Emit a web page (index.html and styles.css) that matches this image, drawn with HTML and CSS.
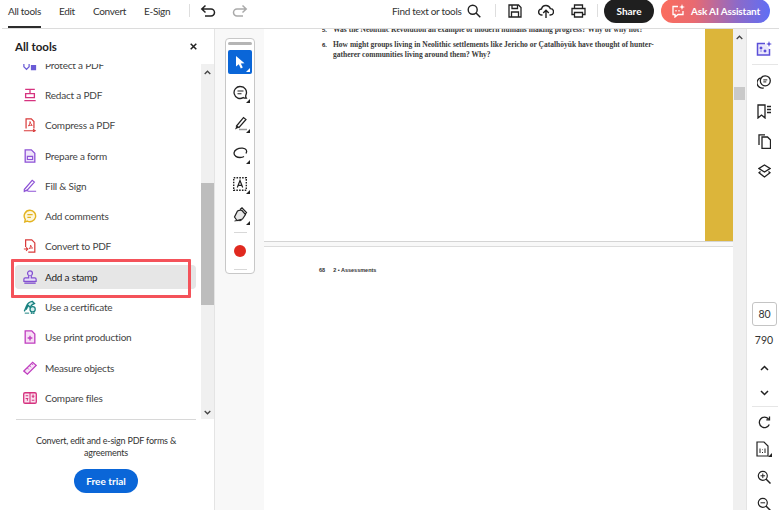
FILE: index.html
```html
<!DOCTYPE html>
<html lang="en">
<head>
<meta charset="utf-8">
<title>All tools</title>
<link rel="stylesheet" href="styles.css">
</head>
<body>
<svg class="defs" width="0" height="0" aria-hidden="true">
  <symbol id="caret" viewBox="0 0 5 5"><path d="M5 0v5H0z" fill="#222"/></symbol>
</svg>
<header class="topbar">
  <nav class="tabs">
    <a class="tab tab-active">All tools</a>
    <a class="tab">Edit</a>
    <a class="tab">Convert</a>
    <a class="tab">E-Sign</a>
  </nav>
  <span class="vsep sep-a"></span>
  <svg class="ico undo" width="16" height="14" viewBox="0 0 16 14"><path d="M5.500 1.500 1.800 5l3.700 3.500M2 5h9a3.500 3.500 0 0 1 0 7H5" fill="none" stroke="#222" stroke-width="1.500"/></svg>
  <svg class="ico redo" width="16" height="14" viewBox="0 0 16 14"><path d="M10.500 1.500 14.200 5l-3.700 3.500M14 5H5a3.500 3.500 0 0 0 0 7h6" fill="none" stroke="#aaa" stroke-width="1.500"/></svg>
  <span class="find">Find text or tools</span>
  <svg class="ico search" width="14" height="14" viewBox="0 0 14 14"><circle cx="5.700" cy="5.700" r="4.500" fill="none" stroke="#222" stroke-width="1.400"/><path d="m9 9 4.300 4.300" stroke="#222" stroke-width="1.500"/></svg>
  <span class="vsep sep-b"></span>
  <svg class="ico save" width="14" height="14" viewBox="0 0 14 14"><path d="M1 1h9.500L13 3.500V13H1zM4 1v3.500h5.500V1M3.500 13V8h7v5" fill="none" stroke="#222" stroke-width="1.300"/></svg>
  <svg class="ico upload" width="16" height="15" viewBox="0 0 16 15"><path d="M4.500 11H3.800A3 3 0 0 1 3.500 5 4.600 4.600 0 0 1 12.300 4.600 3.200 3.200 0 0 1 12.300 11h-.8M8 14V6.500M5.200 9 8 6.300 10.800 9" fill="none" stroke="#222" stroke-width="1.400"/></svg>
  <svg class="ico print" width="15" height="14" viewBox="0 0 15 14"><path d="M3.500 4V1h8v3M3.500 10.500H1V4.500h13v6h-2.500M3.500 8.500h8V13h-8z" fill="none" stroke="#222" stroke-width="1.300"/></svg>
  <span class="vsep sep-c"></span>
  <button class="share">Share</button>
  <button class="ask">
    <svg width="15" height="14" viewBox="0 0 15 14"><path d="M7 2.500H2v8h2v2.500l3-2.500h5V7" fill="none" stroke="#fff" stroke-width="1.300"/><path d="M11 0l.8 2.200L14 3l-2.200.8L11 6l-.8-2.200L8 3l2.200-.8z" fill="#fff"/><path d="M5 6v1.500M8 6v1.500" stroke="#fff" stroke-width="1.200"/></svg>
    Ask AI Assistant
  </button>
</header>

<div class="workspace">
  <aside class="panel">
    <div class="panel-head">
      <h2 class="panel-title">All tools</h2>
      <svg class="close" width="7" height="7" viewBox="0 0 7 7"><path d="m.7.700 5.600 5.600m0-5.600L.7 6.300" stroke="#222" stroke-width="1.500"/></svg>
    </div>
    <div class="panel-body">
      <ul class="tool-list">
        <li class="tool"><svg class="ti" viewBox="0 0 16 16" width="16" height="16"><path d="M1 4v6l3 3 3-3V4" fill="none" stroke="#6a5bd6" stroke-width="1.400"/><rect x="9" y="8" width="6" height="6" fill="#6a5bd6"/></svg>Protect a PDF</li>
        <li class="tool"><svg class="ti" viewBox="0 0 16 16" width="16" height="16"><path d="M2.500 1.500h11M8 1.500V6M1.500 14.500h13M3 6.500h10V11H3z" fill="none" stroke="#d6337f" stroke-width="1.500"/></svg>Redact a PDF</li>
        <li class="tool"><svg class="ti" viewBox="0 0 16 16" width="16" height="16"><path d="M3.500 12V1h6L12.500 4v8" fill="none" stroke="#d93a3a" stroke-width="1.400"/><path d="M1 14.500h12M11.500 12.800 14 14.500l-2.500 1.500" fill="none" stroke="#d93a3a" stroke-width="1.200"/><path d="M6 9c1.500-1 2-3 2-5 .5 2 1.500 3.500 2.500 4.500-1.500-.3-3-.2-4.500.5z" fill="none" stroke="#d93a3a"/></svg>Compress a PDF</li>
        <li class="tool"><svg class="ti" viewBox="0 0 16 16" width="16" height="16"><path d="M2.500 1h7L13.500 5v10h-11z" fill="#efe6fa" stroke="#8e53d6" stroke-width="1.500"/><path d="M5 8.500h6V12H5z" fill="none" stroke="#8e53d6" stroke-width="1.300"/></svg>Prepare a form</li>
        <li class="tool"><svg class="ti" viewBox="0 0 16 16" width="16" height="16"><path d="M1.500 12 10.500 1.500l2.500 2L5 12.500l-3.500 1.500zM1 14.500c3-2 4-1 5.500-.5h8.500" fill="none" stroke="#8e53d6" stroke-width="1.400"/></svg>Fill &amp; Sign</li>
        <li class="tool"><svg class="ti" viewBox="0 0 16 16" width="16" height="16"><path d="M8 1.500a6.500 6.500 0 1 1-3 12.300L2 14.800l.6-3A6.500 6.500 0 0 1 8 1.500z" fill="#fdf6dc" stroke="#e3b320" stroke-width="1.600"/><path d="M5 6.500h6M5 9.500h4" stroke="#e3b320" stroke-width="1.300"/></svg>Add comments</li>
        <li class="tool"><svg class="ti" viewBox="0 0 16 16" width="16" height="16"><path d="M3 9V1h7l3.500 3.500V15H6" fill="none" stroke="#d93a3a" stroke-width="1.400"/><path d="M1 11.500h4M3.500 9.500l2 2-2 2" fill="none" stroke="#d93a3a" stroke-width="1.200"/><path d="M7 11c1.200-1 1.700-2.500 1.700-4 .4 1.500 1.200 2.700 2.300 3.300-1.400-.1-2.800 0-4 .7z" fill="none" stroke="#d93a3a"/></svg>Convert to PDF</li>
        <li class="tool tool-active"><svg class="ti" viewBox="0 0 16 16" width="16" height="16"><circle cx="8" cy="3.800" r="2.800" fill="#e7dcf8" stroke="#8351d0" stroke-width="1.400"/><path d="M6.500 6.500V9H2.500a1.500 1.500 0 0 0-1.500 1.500V13h14v-2.500A1.500 1.500 0 0 0 13.500 9h-4V6.500" fill="#e7dcf8" stroke="#8351d0" stroke-width="1.400"/><path d="M1.500 15h13" stroke="#8351d0" stroke-width="1.600"/></svg>Add a stamp</li>
        <li class="tool"><svg class="ti" viewBox="0 0 16 16" width="16" height="16"><path d="M1.500 13 4 7c1-3 4-5 6.500-5.500L13 4c-2 .5-3.500 2-4.500 3.500M3.500 11 6 6l2 2.500" fill="#d6efee" stroke="#17807f" stroke-width="1.500"/><circle cx="11" cy="10.500" r="3" fill="#d6efee" stroke="#17807f" stroke-width="1.400"/><path d="M9.500 13v3l1.500-1 1.500 1v-3M2 15h5" fill="none" stroke="#17807f" stroke-width="1.100"/></svg>Use a certificate</li>
        <li class="tool"><svg class="ti" viewBox="0 0 16 16" width="16" height="16"><path d="M2.500 1h7.500l3.500 3.500V15h-11z" fill="#f7dff5" stroke="#c03fc0" stroke-width="1.500"/><path d="M8 6.500V12M5.300 9.200h5.400" stroke="#c03fc0" stroke-width="1.600"/></svg>Use print production</li>
        <li class="tool"><svg class="ti" viewBox="0 0 16 16" width="16" height="16"><path d="m1 11.500 10-10L15 5 5 15z" fill="#f8e6f6" stroke="#c03fc0" stroke-width="1.500"/><path d="m5 8 1.700 1.700M7.500 5.500l1.700 1.700M10 3l1.700 1.700" stroke="#c03fc0"/></svg>Measure objects</li>
        <li class="tool"><svg class="ti" viewBox="0 0 16 16" width="16" height="16"><rect x=".8" y="2" width="14.400" height="12" rx="1.500" fill="#fbe1ef" stroke="#d6337f" stroke-width="1.500"/><path d="M8 2v12M3 5.500h3M3 8.500h3M10 6h3M10 10.500h3M5 11v-3M11.500 4v4" stroke="#d6337f" stroke-width="1.200"/></svg>Compare files</li>
      </ul>
      <div class="scrollbar sb-left">
        <svg class="chev" width="7" height="5" viewBox="0 0 7 5"><path d="M.7 4 3.500 1.200 6.300 4" fill="none" stroke="#444" stroke-width="1.300"/></svg>
        <div class="track"><div class="thumb"></div></div>
        <svg class="chev" width="7" height="5" viewBox="0 0 7 5"><path d="M.7 1 3.500 3.800 6.300 1" fill="none" stroke="#444" stroke-width="1.300"/></svg>
      </div>
    </div>
    <div class="panel-foot">
      <p class="promo">Convert, edit and e-sign PDF forms &amp;<br>agreements</p>
      <button class="trial">Free trial</button>
    </div>
  </aside>

  <main class="canvas">
    <div class="gutter">
      <div class="quick">
        <span class="handle"></span>
        <span class="qt qt-on">
          <svg width="11" height="13" viewBox="0 0 11 13"><path d="M1 0v10.500l2.800-2.300 2 4.300 2-.9-2-4.200 3.700-.2z" fill="#fff"/></svg>
          <svg class="qc" width="4" height="4"><path d="M4 0v4H0z" fill="#fff"/></svg>
        </span>
        <span class="qt">
          <svg width="15" height="15" viewBox="0 0 15 15"><path d="M7.500 1.500a6 6 0 0 1 5.500 8.300c-.4 1-.4 2.300.3 3.400-1.300 0-2.300-.2-3.100-.6A6 6 0 1 1 7.500 1.500z" fill="none" stroke="#222" stroke-width="1.300"/><path d="M4.500 6h6M4.500 8.800h4" stroke="#222" stroke-width="1.100"/></svg>
          <svg class="qc"><use href="#caret"/></svg>
        </span>
        <span class="qt">
          <svg width="15" height="15" viewBox="0 0 15 15"><path d="M3.500 10 10.500 1.500 13 3.500 6 11.500z" fill="none" stroke="#222" stroke-width="1.200"/><path d="M3.500 10 2 13.500l4-2z" fill="#222"/><path d="M6 13.500h8" stroke="#999" stroke-width="1.500"/></svg>
          <svg class="qc"><use href="#caret"/></svg>
        </span>
        <span class="qt">
          <svg width="15" height="13" viewBox="0 0 15 13"><path d="M13 6.500C14.500 4 13.500 1.500 9.500 1.200 5 .9 1.200 3 1 6c-.1 3 3 4.500 6 4.500 1.500 0 3-.3 4-1" fill="none" stroke="#222" stroke-width="1.300"/></svg>
          <svg class="qc"><use href="#caret"/></svg>
        </span>
        <span class="qt">
          <svg width="14" height="14" viewBox="0 0 14 14"><rect x=".7" y=".7" width="12.600" height="12.600" fill="none" stroke="#222" stroke-width="1.400" stroke-dasharray="1.600 1.200"/><path d="m4.300 10.500 2.700-7 2.700 7M5.200 8.300h3.600" fill="none" stroke="#222" stroke-width="1.200"/></svg>
          <svg class="qc"><use href="#caret"/></svg>
        </span>
        <span class="qt">
          <svg width="15" height="15" viewBox="0 0 15 15"><path d="M4 13.500 1.500 10l3-6C7 2.800 8 3 9 3.500l3.500 4-3 4.500zM7 2.500 9 .8l4.500 4.700-1.500 2" fill="#e8e8e8" stroke="#222" stroke-width="1.200"/><path d="M1.500 14c3-1 5 0 7-.5" stroke="#222" fill="none"/></svg>
          <svg class="qc"><use href="#caret"/></svg>
        </span>
        <span class="qsep"></span>
        <span class="dot"></span>
        <span class="qsep qsep-end"></span>
      </div>
    </div>
    <div class="doc">
      <section class="page page-a">
        <div class="page-text">
          <ol class="questions">
            <li class="q"><span class="qn">5.</span><span>Was the Neolithic Revolution an example of modern humans making progress? Why or why not?</span></li>
            <li class="q"><span class="qn">6.</span><span>How might groups living in Neolithic settlements like Jericho or Çatalhöyük have thought of hunter-<br>gatherer communities living around them? Why?</span></li>
          </ol>
        </div>
        <div class="gold"></div>
      </section>
      <section class="page page-b">
        <p class="folio"><span class="fn">68</span><span>2 • Assessments</span></p>
      </section>
    </div>
    <div class="scrollbar sb-right">
      <svg class="chev" width="7" height="5" viewBox="0 0 7 5"><path d="M.7 4 3.500 1.200 6.300 4" fill="none" stroke="#444" stroke-width="1.300"/></svg>
      <div class="track"><div class="thumb"></div></div>
    </div>
  </main>

  <aside class="rail">
    <div class="rail-top">
      <svg class="ai" width="16" height="16" viewBox="0 0 16 16"><path d="M9 2.500H1.500V14h12V8" fill="#e9e6fb" stroke="#5b4fd8" stroke-width="1.500"/><path d="M4 6h2v2H4zM8 9h2v2H8zM4 10h2" fill="#5b4fd8" stroke="#5b4fd8" stroke-width=".6"/><path d="m13 0 .8 2.200L16 3l-2.200.8L13 6l-.8-2.200L10 3l2.200-.8z" fill="#5b4fd8"/></svg>
      <span class="rail-sep"></span>
      <svg class="ri" width="14" height="14" viewBox="0 0 14 14"><circle cx="8.300" cy="5.800" r="5" fill="none" stroke="#222" stroke-width="1.300"/><path d="M6.300 4.900h4M6.300 6.900h3" stroke="#222"/><path d="M3.700 2.800a5.200 5.200 0 0 0 3 10" fill="none" stroke="#222" stroke-width="1.300"/></svg>
      <svg class="ri" width="14" height="15" viewBox="0 0 14 15"><path d="M1 1h7v13l-3.500-3L1 14zM10 2.500h4M10 5.500h4M10 8.500h4" fill="none" stroke="#222" stroke-width="1.300"/></svg>
      <svg class="ri" width="13" height="15" viewBox="0 0 13 15"><path d="M4 3h5.500L12.500 6v8.500H4zM1 11V.8h6" fill="none" stroke="#222" stroke-width="1.300"/></svg>
      <svg class="ri" width="13" height="14" viewBox="0 0 13 14"><path d="m6.500 1 5.500 3.500L6.500 8 1 4.500zM2.500 7.500 1 8.800 6.500 13 12 8.800l-1.500-1.300" fill="none" stroke="#222" stroke-width="1.300"/></svg>
    </div>
    <div class="rail-bottom">
      <span class="pagebox">80</span>
      <span class="pagecount">790</span>
      <svg class="nav nav-up" width="9" height="6" viewBox="0 0 9 6"><path d="M1 5 4.500 1.500 8 5" fill="none" stroke="#222" stroke-width="1.500"/></svg>
      <svg class="nav nav-down" width="9" height="6" viewBox="0 0 9 6"><path d="M1 1 4.500 4.500 8 1" fill="none" stroke="#222" stroke-width="1.500"/></svg>
      <span class="rail-sep rail-sep-b"></span>
      <svg class="rb rb-rotate" width="13" height="13" viewBox="0 0 13 13"><path d="M11.300 8.500A5.200 5.200 0 1 1 10.500 3M11.500 .6v3.200H8.300" fill="none" stroke="#222" stroke-width="1.300"/></svg>
      <span class="fit">
        <svg width="13" height="16" viewBox="0 0 13 16"><path d="M1 1h7l4 4v10H1z" fill="none" stroke="#222" stroke-width="1.200"/><path d="M4 7.500V12M6.500 8.500v.6M6.500 11v1M9 7.500V12" stroke="#222"/></svg>
        <svg class="fc"><use href="#caret"/></svg>
      </span>
      <svg class="rb" width="14" height="14" viewBox="0 0 14 14"><circle cx="5.800" cy="5.800" r="4.500" fill="none" stroke="#222" stroke-width="1.200"/><path d="m9 9 4.500 4.500" stroke="#222" stroke-width="1.500"/><path d="M3.500 5.800h4.600M5.800 3.500v4.600" stroke="#222"/></svg>
      <svg class="rb" width="14" height="14" viewBox="0 0 14 14"><circle cx="5.800" cy="5.800" r="4.500" fill="none" stroke="#222" stroke-width="1.200"/><path d="m9 9 4.500 4.500" stroke="#222" stroke-width="1.500"/><path d="M3.500 5.800h4.600" stroke="#222"/></svg>
    </div>
  </aside>
</div>
</body>
</html>
```

FILE: styles.css
```css
*, *::before, *::after { box-sizing: border-box; }
html, body { margin: 0; height: 100%; }
body {
  width: 779px;
  height: 510px;
  overflow: hidden;
  background: #fff;
  color: #2c2c2c;
  font-family: Lato, "Open Sans", sans-serif;
  font-size: 10px;
}
.defs { position: absolute; }
svg { display: block; flex: none; }

/* top bar */
.topbar {
  height: 29px;
  display: flex;
  align-items: flex-start;
  border-bottom: 1px solid #dcdcdc;
  margin-left: 2px;
}
.tabs { display: flex; margin-left: 6px; gap: 18px; height: 28px; width: 163px; flex: none; }
.tab { height: 28px; padding-top: 5px; font-size: 10px; letter-spacing: -.3px; line-height: 13px; color: #333; white-space: nowrap; }
.tab-active { border-bottom: 2px solid #2c2c2c; }
.vsep { width: 1px; height: 13px; background: #dedede; margin-top: 4px; flex: none; }
.sep-a { margin-left: 18px; }
.ico { margin-top: 4px; }
.undo { margin-left: 10px; }
.redo { margin-left: 16px; }
.find { margin-left: 144px; width: 69px; flex: none; padding-top: 5px; line-height: 13px; font-size: 10px; letter-spacing: -.3px; color: #333; white-space: nowrap; }
.search { margin-left: 6px; }
.sep-b { margin-left: 14px; }
.save { margin-left: 12px; }
.upload { margin-left: 16px; }
.print { margin-left: 17px; }
.sep-c { margin-left: 11px; }
.share, .ask {
  border: 0;
  color: #fff;
  font: 700 10px Lato, sans-serif;
  padding: 0;
  flex: none;
}
.share { width: 50px; margin-left: 6px; background: #1f1f1f; border-radius: 12px; margin-top: -1px; height: 24px; }
.ask {
  width: 109px;
  margin-left: 7px;
  margin-top: -1px;
  height: 24px;
  border-radius: 12px;
  letter-spacing: -.15px;
  background: linear-gradient(90deg, #fb6d5e 0%, #e96a70 30%, #8d6ac8 70%, #5f6ef5 100%);
  display: flex;
  align-items: center;
  justify-content: center;
  gap: 5px;
}

/* layout */
.workspace { display: flex; height: 481px; }

/* panel */
.panel {
  width: 215px;
  flex: none;
  border-right: 1px solid #e4e4e4;
  display: flex;
  flex-direction: column;
}
.panel-head {
  height: 34px;
  flex: none;
  display: flex;
  align-items: center;
  justify-content: space-between;
  padding: 1px 17px 0 15px;
}
.panel-title { margin: 0; font-size: 11.500px; font-weight: 700; color: #222; }
.panel-body { height: 356px; display: flex; flex: none; padding-top: 1px; }
.tool-list {
  list-style: none;
  margin: 0;
  padding: 0 0 0 15px;
  width: 201px;
  height: 355px;
  overflow: hidden;
  position: relative;
  z-index: 0;
}
.tool {
  height: 30.300px;
  display: flex;
  align-items: center;
  gap: 8px;
  padding-left: 7px;
  width: 181px;
  font-size: 10px;
  letter-spacing: -.2px;
  color: #444;
  position: relative;
  white-space: nowrap;
}
.tool:first-child { margin-top: -14.500px; }
.ti { width: 14px; height: 14px; margin-left: 1px; }
.tool-active { color: #222; }
.tool-active::before {
  content: "";
  position: absolute;
  left: 0;
  right: 0;
  top: 3px;
  bottom: 3px;
  background: #e6e6e6;
  border-radius: 4px;
  z-index: -1;
}
.tool-active::after {
  content: "";
  position: absolute;
  left: -4.500px;
  top: -3px;
  width: 180px;
  height: 39px;
  border: 3px solid #f4525a;
  border-radius: 1px;
  pointer-events: none;
}
.scrollbar {
  width: 13px;
  flex: none;
  background: #f0f0f0;
  display: flex;
  flex-direction: column;
  align-items: center;
}
.chev { margin: 4px 0; }
.scrollbar .chev:first-child { margin-top: 6px; }
.track { flex: 1; align-self: stretch; }
.sb-left .track { padding-top: 104px; }
.sb-left .thumb { height: 122px; background: #bdbdbd; }
.sb-right .track { padding-top: 43px; padding-left: 1px; padding-right: 1px; }
.sb-right .thumb { height: 13px; background: #c9c9c9; }
.panel-foot {
  margin: 0 18px 0 16px;
  border-top: 1px solid #d8d8d8;
  display: flex;
  flex-direction: column;
  align-items: center;
  flex: none;
  height: 91px;
}
.promo {
  margin: 15px 0 0;
  text-align: center;
  font-size: 9px;
  letter-spacing: -.2px;
  line-height: 11.500px;
  color: #333;
}
.trial {
  margin-top: 11px;
  width: 64px;
  height: 24px;
  border: 0;
  border-radius: 12px;
  background: #0a66d8;
  color: #fff;
  font: 700 10px Lato, sans-serif;
  padding: 0;
}

/* canvas */
.canvas { flex: 1; display: flex; min-width: 0; background: #f8f8f8; }
.gutter { width: 49px; flex: none; padding: 9px 0 0 10px; }
.quick {
  width: 30px;
  height: 236px;
  background: #fff;
  border: 1px solid #c8c8c8;
  border-radius: 4px;
  display: flex;
  flex-direction: column;
  align-items: center;
  padding-top: 3px;
}
.handle { width: 24px; height: 3px; border-radius: 2px; background: #b5b5b5; flex: none; }
.qt {
  width: 24px;
  height: 24px;
  flex: none;
  margin-top: 6.500px;
  display: flex;
  align-items: center;
  justify-content: center;
  position: relative;
}
.qt:nth-child(2) { margin-top: 5px; }
.qt-on { background: #0a66d8; border-radius: 2px; }
.qc { position: absolute; right: 2px; bottom: 2px; width: 4px; height: 4px; }
.qsep { width: 13px; height: 1px; background: #d8d8d8; margin-top: 5px; flex: none; }
.dot { width: 12px; height: 12px; border-radius: 50%; background: #e0291f; margin: 12px 0 12px; flex: none; }
.qsep-end { margin-top: 0; }

.doc { width: 469px; flex: none; display: flex; flex-direction: column; }
.page { background: #fff; flex: none; }
.page-a {
  height: 213px;
  display: flex;
  justify-content: space-between;
  border-bottom: 1px solid #d4d4d4;
}
.page-text { overflow: hidden; padding: 0 0 0 58px; font: 700 7.500px/10px "Liberation Serif", serif; color: #3a3a3a; }
.questions { list-style: none; margin: -4px 0 0; padding: 0; }
.q { display: flex; margin-bottom: 5px; white-space: nowrap; }
.qn { width: 11px; font-family: "Liberation Sans", sans-serif; font-size: 6px; color: #222; }
.gold { width: 28px; background: #dcb53a; flex: none; }
.page-b {
  margin-top: 4px;
  flex: 1;
  border-top: 1px solid #dcdcdc;
}
.folio { margin: 20px 0 0 55px; font: 700 5.500px/7px "Liberation Sans", sans-serif; color: #333; display: flex; gap: 8px; }

/* rail */
.rail {
  width: 33px;
  flex: none;
  border-left: 1px solid #e4e4e4;
  display: flex;
  flex-direction: column;
  justify-content: space-between;
  align-items: center;
  background: #fff;
}
.rail-top, .rail-bottom { display: flex; flex-direction: column; align-items: center; width: 100%; }
.rail-top { padding-top: 12px; }
.ai { margin-left: 1px; }
.rail-sep { width: 26px; height: 1px; background: #e6e6e6; margin: 7px 0 10px 4px; flex: none; }
.ri { margin-bottom: 15px; margin-left: 2px; }
.rail-bottom { height: 208px; }
.pagebox {
  width: 25px;
  height: 24px;
  border: 1px solid #c4c4c4;
  border-radius: 3px;
  display: flex;
  align-items: center;
  justify-content: center;
  margin-left: 3px;
  font-size: 10.500px;
  color: #333;
  flex: none;
}
.pagecount { margin-top: 7.500px; line-height: 13px; font-size: 10.500px; color: #333; margin-left: 2px; }
.nav { margin-left: 2px; }
.nav-up { margin-top: 18.500px; }
.nav-down { margin-top: 19px; }
.rail-sep-b { margin: 10px 0 8.500px 4px; }
.rb { margin-bottom: 13px; margin-left: 2px; }
.rb-rotate { margin-bottom: 12.500px; }
.fit { position: relative; display: block; margin-bottom: 13px; margin-left: 1px; width: 16px; height: 16px; flex: none; }
.fc { position: absolute; right: 0; bottom: 0; width: 4px; height: 4px; }
```
